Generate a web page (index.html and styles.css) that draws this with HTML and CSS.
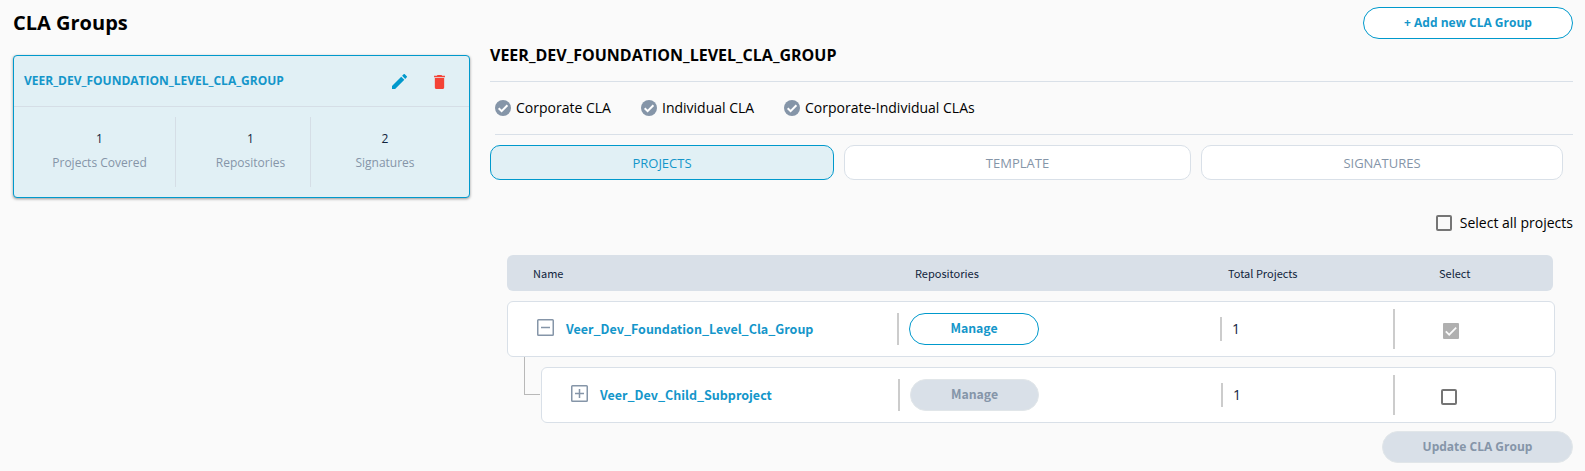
FILE: index.html
```html
<!DOCTYPE html>
<html lang="en">
<head>
<meta charset="utf-8">
<title>CLA Groups</title>
<link rel="stylesheet" href="styles.css">
</head>
<body>
<main class="page">
  <aside class="sidebar">
    <h1 class="page-title"><span>CLA Groups</span></h1>
    <section class="group-card">
      <header class="group-head">
        <span class="group-name">VEER_DEV_FOUNDATION_LEVEL_CLA_GROUP</span>
        <svg class="icon edit" viewBox="3 3 18 18"><path d="M3 17.25V21h3.75L17.81 9.94l-3.75-3.75L3 17.25zM20.71 7.04a1 1 0 0 0 0-1.41l-2.34-2.34a1 1 0 0 0-1.41 0l-1.83 1.83 3.75 3.75 1.83-1.83z"/></svg>
        <svg class="icon trash" viewBox="5 3 14 18"><path d="M6 19c0 1.1.9 2 2 2h8c1.1 0 2-.9 2-2V7H6v12zM19 4h-3.5l-1-1h-5l-1 1H5v2h14V4z"/></svg>
      </header>
      <div class="stats">
        <div class="stat"><b>1</b><span>Projects Covered</span></div>
        <div class="stat"><b>1</b><span>Repositories</span></div>
        <div class="stat"><b>2</b><span>Signatures</span></div>
      </div>
    </section>
  </aside>

  <section class="detail">
    <div class="top-actions"><button class="btn add"><span>+ Add new CLA Group</span></button></div>
    <h2 class="detail-title"><span>VEER_DEV_FOUNDATION_LEVEL_CLA_GROUP</span></h2>
    <div class="types">
      <span class="type corporate"><svg class="check" viewBox="0 0 16 16"><circle cx="8" cy="8" r="8"/><path d="M3.7 8.3l2.9 2.9 5.8-5.9"/></svg><span>Corporate CLA</span></span>
      <span class="type individual"><svg class="check" viewBox="0 0 16 16"><circle cx="8" cy="8" r="8"/><path d="M3.7 8.3l2.9 2.9 5.8-5.9"/></svg><span>Individual CLA</span></span>
      <span class="type"><svg class="check" viewBox="0 0 16 16"><circle cx="8" cy="8" r="8"/><path d="M3.7 8.3l2.9 2.9 5.8-5.9"/></svg><span>Corporate-Individual CLAs</span></span>
    </div>
    <nav class="tabs">
      <span class="tab active">PROJECTS</span>
      <span class="tab">TEMPLATE</span>
      <span class="tab">SIGNATURES</span>
    </nav>
    <label class="select-all"><i class="box"></i><span>Select all projects</span></label>

    <div class="table">
      <div class="thead"><span>Name</span><span>Repositories</span><span>Total Projects</span><span>Select</span></div>
      <div class="row parent">
        <div class="name"><svg class="toggle" viewBox="0 0 17 17"><rect x=".75" y=".75" width="15.5" height="15.5" rx=".8"/><path d="M4 8.5h9"/></svg><span>Veer_Dev_Foundation_Level_Cla_Group</span></div>
        <div class="repo"><button class="btn manage">Manage</button></div>
        <div class="total">1</div>
        <div class="select"><svg class="checked" viewBox="0 0 16 16"><rect width="16" height="16" rx="1"/><path d="M2.8 8.4l3.4 3.3 7-7.1"/></svg></div>
      </div>
      <div class="branch">
        <div class="connector"></div>
        <div class="row child">
          <div class="name"><svg class="toggle" viewBox="0 0 17 17"><rect x=".75" y=".75" width="15.5" height="15.5" rx=".8"/><path d="M4 8.5h9M8.5 4v9"/></svg><span>Veer_Dev_Child_Subproject</span></div>
          <div class="repo"><button class="btn manage disabled">Manage</button></div>
          <div class="total">1</div>
          <div class="select"><i class="box"></i></div>
        </div>
      </div>
    </div>
    <div class="footer"><button class="btn update disabled"><span>Update CLA Group</span></button></div>
  </section>
</main>
</body>
</html>
```
FILE: styles.css
```css
* { box-sizing: border-box; }
body { margin: 0; background: #fafafa; font-family: "Open Sans", sans-serif; color: #000; }
.page { display: flex; gap: 20px; width: 1573px; height: 471px; padding-left: 13px; overflow: hidden; }
.sidebar { width: 457px; flex: none; }
.page-title { margin: 0; height: 55px; padding-top: 8px; font-size: 20px; line-height: 30px; font-weight: 700; }
.group-card { height: 143px; border: 1px solid #0099cc; border-radius: 4px; background: #e1f0f5; box-shadow: 0 1px 3px rgba(0,0,0,.4); }
.group-head { display: flex; align-items: center; height: 51px; padding: 0 23px 0 10px; border-bottom: 1px solid #d5dee6; }
.group-name { flex: 1; padding-bottom: 1px; color: #1496ca; font-size: 12px; font-weight: 700; line-height: 20px; }
.icon { display: block; flex: none; margin-top: 2px; }
.edit { width: 15px; height: 15px; margin: 1px 26px 0 0; fill: #0099cc; }
.trash { width: 13px; height: 14px; fill: #f44336; }
.stats { display: grid; grid-template-columns: 161px 135px 1fr; height: 70px; margin-top: 10px; }
.stat { display: flex; flex-direction: column; align-items: center; padding-top: 10px; font-size: 12px; line-height: 24px; color: #8595a8; }
.stat + .stat { border-left: 1px solid #d5dee6; }
.stat:nth-child(1) { padding-left: 10px; border-right: 0; }
.stat:nth-child(2) { padding-left: 15px; }
.stat:nth-child(3) { padding-right: 10px; }
.stat b { font-weight: 400; color: #10243c; }
.detail { width: 1083px; }
.top-actions { display: flex; justify-content: flex-end; height: 39px; padding-top: 7px; }
.btn { height: 32px; padding: 0 0 1px; border: 1px solid #0099cc; border-radius: 16px; background: #fff; color: #1496ca; font: 700 12px "Open Sans", sans-serif; }
.add { width: 210px; }
.detail-title { margin: 0; height: 43px; padding-top: 4px; border-bottom: 1px solid #d9e0e8; font-size: 16px; line-height: 24px; font-weight: 700; }
.types { display: flex; align-items: center; height: 53px; margin-left: 5px; border-bottom: 1px solid #d9e0e8; font-size: 14px; }
.type { display: flex; align-items: center; gap: 5px; height: 20px; }
.type > span { padding-bottom: 2px; }
.corporate { width: 146px; }
.individual { width: 143px; }
.check { width: 16px; height: 16px; fill: #8595a8; }
.check path { fill: none; stroke: #fff; stroke-width: 2; }
.tabs { display: grid; grid-template-columns: 344px 347px 362px; gap: 10px; margin-top: 10px; }
.tab { height: 35px; border: 1px solid #d9e0e8; border-radius: 10px; background: #fff; color: #8595a8; font-size: 13px; line-height: 35px; text-align: center; }
.tab.active { border-color: #0099cc; background: #e1f0f5; color: #1496ca; }
.select-all { display: flex; justify-content: flex-end; align-items: center; gap: 8px; height: 16px; margin-top: 35px; font-size: 14px; line-height: 16px; }
.box { display: block; width: 16px; height: 16px; border: 2px solid #757575; border-radius: 2px; }
.table { margin: 24px 0 0 17px; font-family: "Noto Sans CJK SC", sans-serif; }
.thead { display: grid; grid-template-columns: 382px 313px 211px auto; width: 1046px; height: 36px; padding-left: 26px; border-radius: 6px; background: #d9e0e8; color: #10243c; font-size: 11px; line-height: 37px; }
.row { display: grid; align-items: center; height: 56px; border: 1px solid #d9e0e8; border-radius: 6px; background: #fff; }
.parent { width: 1048px; margin-top: 10px; padding-left: 29px; grid-template-columns: 360px 323px 173px 1fr; }
.child { width: 1015px; padding-left: 29px; grid-template-columns: 327px 323px 172px 1fr; }
.name { display: flex; align-items: center; gap: 12px; color: #1496ca; font-weight: 700; font-size: 12.5px; line-height: 20px; }
.toggle { width: 17px; height: 17px; margin-top: -3px; fill: none; stroke: #8595a8; stroke-width: 1.5; }
.repo { display: flex; height: 32px; padding-left: 10px; border-left: 2px solid #ccc; }
.manage { width: 130px; padding-bottom: 3px; font-family: "Noto Sans CJK SC", sans-serif; font-size: 12.3px; }
.child .manage { width: 129px; }
.total { height: 24px; padding-left: 10px; border-left: 2px solid #ccc; color: #10243c; font: 14px/24px "Open Sans", sans-serif; }
.select { display: flex; align-items: center; height: 40px; padding: 4px 0 0 48px; border-left: 2px solid #ccc; }
.child .select { padding-left: 46px; }
.checked { width: 16px; height: 16px; fill: #b0b0b0; }
.checked path { fill: none; stroke: #fafafa; stroke-width: 1.7; }
.branch { display: flex; }
.connector { width: 16px; height: 38px; margin: 0 1px 0 17px; border: solid #b8b8b8; border-width: 0 0 1px 1px; }
.child { margin-top: 10px; }
.disabled { border-color: #e1e6e9; background: #d9e0e8; color: #8595a8; }
.footer { display: flex; justify-content: flex-end; margin-top: 8px; }
.update { width: 191px; }
```
